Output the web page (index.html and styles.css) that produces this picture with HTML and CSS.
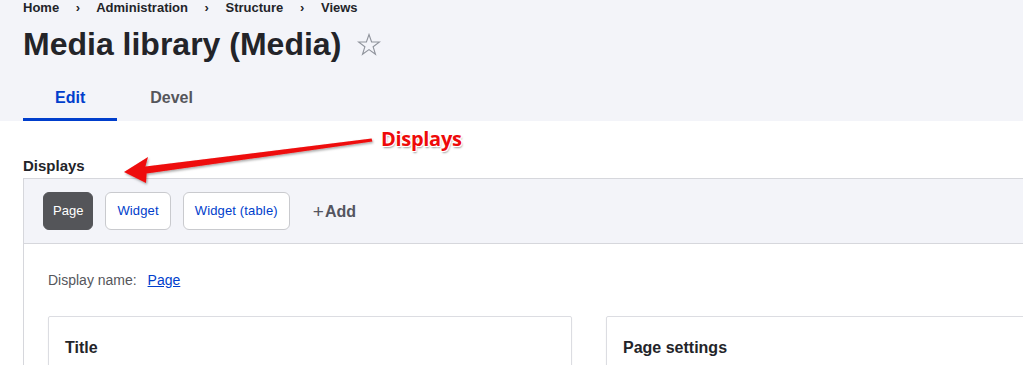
FILE: index.html
```html
<!DOCTYPE html>
<html lang="en">
<head>
    <meta charset="UTF-8">
    <title>Media library (Media)</title>
    <link rel="stylesheet" href="styles.css">
</head>
<body>

    <div class="page-header">
        <nav class="breadcrumb">
            <a href="#">Home</a>
            <span class="sep">›</span>
            <a href="#">Administration</a>
            <span class="sep">›</span>
            <a href="#">Structure</a>
            <span class="sep">›</span>
            <a href="#">Views</a>
        </nav>
        <h1 class="page-title">
            Media library (Media)
            <svg class="star" width="24" height="24" viewBox="0 0 24 24">
                <polygon points="12,1.5 14.6,9 22.5,9 16.1,13.7 18.5,21.3 12,16.6 5.5,21.3 7.9,13.7 1.5,9 9.4,9" fill="none" stroke="#8f939c" stroke-width="1.1" stroke-linejoin="miter"/>
            </svg>
        </h1>
        <ul class="tabs">
            <li class="tab active"><a href="#">Edit</a></li>
            <li class="tab"><a href="#">Devel</a></li>
        </ul>
    </div>

    <div class="content">
        <h2 class="section-title">Displays</h2>
        <div class="display-bar">
            <a href="#" class="display-btn active">Page</a>
            <a href="#" class="display-btn">Widget</a>
            <a href="#" class="display-btn">Widget (table)</a>
            <a href="#" class="add-link"><span class="plus">+</span>Add</a>
        </div>
        <div class="display-panel">
            <div class="display-name">
                Display name:
                <a href="#">Page</a>
            </div>
            <div class="columns">
                <div class="card"><h3>Title</h3></div>
                <div class="card"><h3>Page settings</h3></div>
            </div>
        </div>
    </div>

    <!-- anotação em vermelho -->
    <div class="annotation">
        <svg class="arrow" width="1023" height="365" viewBox="0 0 1023 365">
            <defs>
                <filter id="sombra" x="-10%" y="-50%" width="120%" height="200%">
                    <feDropShadow dx="1" dy="1.5" stdDeviation="1" flood-color="#000" flood-opacity="0.35"/>
                </filter>
            </defs>
            <polygon filter="url(#sombra)" fill="#ee0a0a"
                points="124,172 148,157 145.4,166.6 371.6,138.4 372.4,141.6 146.6,173.4 146,183"/>
        </svg>
        <span class="annotation-label">Displays</span>
    </div>

</body>
</html>
```

FILE: styles.css
```css
body { margin: 0; font-family: "Liberation Sans", Arial, sans-serif; color: #232429; background-color: #fff; overflow: hidden; position: relative; }
a { text-decoration: none; }

.page-header { background-color: #f3f4f9; padding: 0 23px; }
.breadcrumb { font-size: 13px; line-height: 16px; font-weight: bold; height: 16px; }
.breadcrumb a { color: #232429; }
.breadcrumb .sep { display: inline-block; margin: 0 13px 0 13px; font-weight: bold; }
.page-title { margin: 8px 0 0; font-size: 32px; line-height: 40px; font-weight: bold; display: flex; align-items: center; }
.page-title .star { margin-left: 16px; margin-top: 1px; }

.tabs { list-style: none; margin: 9px 0 0; padding: 0; display: flex; }
.tab a { display: block; padding: 5px 32px 0 33px; line-height: 40px; font-size: 16px; font-weight: bold; color: #55565b; border-bottom: 3px solid transparent; }
.tab.active a { color: #003ecc; border-bottom-color: #003ecc; padding-left: 32px; padding-right: 32px; }

.content { padding: 35px 0 0 23px; }
.section-title { margin: 0 0 2px; font-size: 15px; line-height: 20px; font-weight: bold; }

.display-bar { display: flex; align-items: center; gap: 12px; background-color: #f3f4f9; border: 1px solid #d6d7dc; border-right: none; padding: 13px 19px; }
.display-btn { display: block; height: 36px; line-height: 36px; padding: 0 11px; border: 1px solid #c9cace; border-radius: 6px; background-color: #fff; color: #003ecc; font-size: 13px; letter-spacing: 0.15px; }
.display-btn.active { background-color: #545559; border-color: #545559; color: #fff; padding: 0 9px; letter-spacing: 0; }
.add-link { margin-left: 11px; color: #545560; font-size: 16px; font-weight: bold; }
.add-link .plus { font-weight: normal; font-size: 19px; margin-right: 1px; position: relative; top: 1px; }

.display-panel { border-left: 1px solid #d6d7dc; padding: 26px 0 40px 24px; }
.display-name { font-size: 14px; line-height: 20px; color: #55565b; }
.display-name a { color: #003ecc; text-decoration: underline; margin-left: 7px; }
.columns { display: grid; grid-template-columns: 524px 524px; gap: 34px; margin-top: 26px; }
.card { border: 1px solid #dcdde2; border-radius: 2px; box-shadow: 0 1px 2px rgba(0,0,0,0.05); padding: 21px 16px 20px; height: 60px; }
.card h3 { margin: 0; font-size: 16px; line-height: 20px; font-weight: bold; color: #232429; }

.annotation { position: absolute; top: 0; left: 0; width: 1023px; height: 365px; pointer-events: none; }
.annotation .arrow { position: absolute; top: 0; left: 0; }
.annotation-label { position: absolute; left: 381px; top: 129px; font-family: "Open Sans", sans-serif; font-weight: bold; font-size: 20px; line-height: 20px; color: #ee0a0a; letter-spacing: -0.3px;
    text-shadow: -1px -1px 0 #fff, 1px -1px 0 #fff, -1px 1px 0 #fff, 1px 1px 0 #fff, 1px 2px 2px rgba(0,0,0,0.4); }
```
